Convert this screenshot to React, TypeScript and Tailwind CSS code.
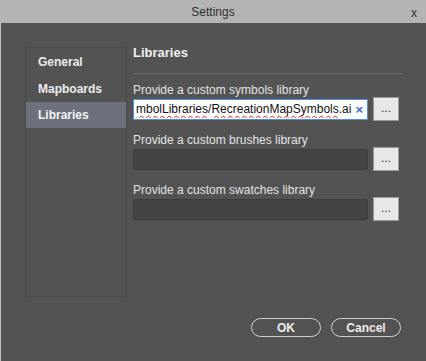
import React from 'react'

function Field({ label, value }: { label: string, value?: string }) {
  return (
    <div className='flex flex-col'>
      <p className='text-[12px] leading-[14px] text-[#e2e2e2]'>{label}</p>
      <div className='flex items-center'>
        {value ? (
          <div className='flex items-center w-[235px] h-[21px] bg-white border border-[#4f8fdc] pl-[2px] pr-[4px] overflow-hidden'>
            <span className='flex-1 whitespace-nowrap overflow-hidden text-[12px] text-[#111]'>
              <span className='underline decoration-wavy decoration-[#e02020] decoration-1 underline-offset-2'>mbolLibraries</span>/
              <span className='underline decoration-wavy decoration-[#e02020] decoration-1 underline-offset-2'>RecreationMapSymbols</span>.ai
            </span>
            <span className='text-[13px] font-bold leading-none text-[#3b6fbf] ml-[1px]'>×</span>
          </div>
        ) : (
          <div className='w-[235px] h-[21px] bg-[#444444] border border-[#3d3d3d] rounded-[2px]' />
        )}
        <button className='ml-[5px] w-[26px] h-[24px] bg-[#e8e8e8] border border-[#9a9a9a] text-[12px] text-[#333] leading-none pb-[2px]'>
          ...
        </button>
      </div>
    </div>
  )
}

export default function App() {
  return (
    <div className='w-[426px] h-[361px] flex flex-col font-["Liberation_Sans",Arial,sans-serif] select-none'>
      {/* title bar */}
      <header className='h-[23px] bg-[#b4b4b4] flex items-center relative'>
        <p className='w-full text-center text-[12px] text-[#2e2e2e]'>Settings</p>
        <span className='absolute right-[9px] top-[4px] text-[12px] text-[#333]'>x</span>
      </header>

      <main className='flex-1 bg-[#535353] border-l border-[#c6c6b6] flex flex-col'>
        <section className='flex pl-[24px] pt-[24px]'>
          {/* sidebar */}
          <nav className='w-[102px] h-[250px] border border-[#4a4a4a] flex flex-col'>
            <div className='h-[27px] flex items-center pl-[12px] text-[12px] font-bold text-[#ececec]'>General</div>
            <div className='h-[27px] flex items-center pl-[12px] text-[12px] font-bold text-[#ececec]'>Mapboards</div>
            <div className='h-[26px] flex items-center pl-[12px] text-[12px] font-bold text-[#f2f2f2] bg-[#6c717d]'>Libraries</div>
          </nav>

          {/* content */}
          <div className='ml-[6px] flex flex-col w-[270px]'>
            <h1 className='text-[13px] font-bold text-[#f0f0f0] leading-[16px] -mt-[2px]'>Libraries</h1>
            <div className='h-px bg-[#666] mt-[12px] mb-[9px]' />
            <div className='flex flex-col gap-[12px]'>
              <Field label='Provide a custom symbols library' value='mbolLibraries/RecreationMapSymbols.ai' />
              <Field label='Provide a custom brushes library' />
              <Field label='Provide a custom swatches library' />
            </div>
          </div>
        </section>

        <footer className='flex justify-end gap-[10px] pr-[25px] mt-[21px]'>
          <button className='w-[70px] h-[19px] rounded-full border border-[#cfcfcf] text-[12px] font-bold text-[#eeeeee] leading-none'>OK</button>
          <button className='w-[70px] h-[19px] rounded-full border border-[#cfcfcf] text-[12px] font-bold text-[#eeeeee] leading-none'>Cancel</button>
        </footer>
      </main>
    </div>
  )
}
